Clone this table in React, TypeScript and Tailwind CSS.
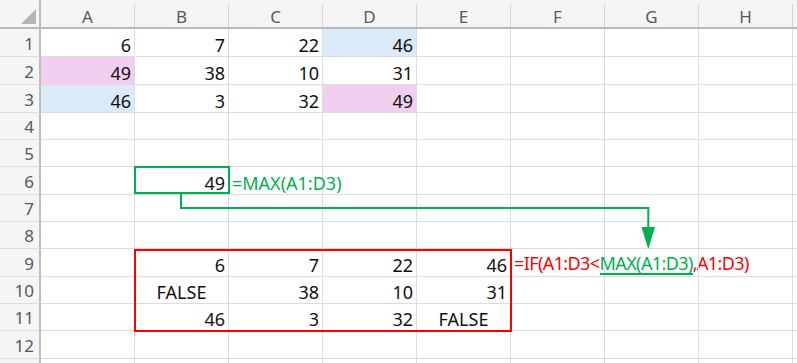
import React from "react";

type Cell = {
  v?: string;
  align?: "right" | "center" | "left";
  bg?: string;
  node?: React.ReactNode;
};

const COLS = ["A", "B", "C", "D", "E", "F", "G", "H"];
const ROW_H = [
  "h-[28px]",
  "h-[28px]",
  "h-[28px]",
  "h-[27px]",
  "h-[27px]",
  "h-[28px]",
  "h-[27px]",
  "h-[27px]",
  "h-[28px]",
  "h-[27px]",
  "h-[27px]",
  "h-[28px]",
];

const PINK = "bg-[#f2cff0]";
const BLUE = "bg-[#daeaf8]";

const n = (v: string, bg?: string): Cell => ({ v, align: "right", bg });
const b = (v: string): Cell => ({ v, align: "center" });

const ifFormula = (
  <span className="text-[#ff0000] tracking-[-0.6px]">
    =IF(A1:D3&lt;
    <span className="inline-block leading-[19px] text-[#00b050] border-b-2 border-[#00b050]">
      MAX(A1:D3)
    </span>
    ,A1:D3)
  </span>
);

const data: Record<number, Record<string, Cell>> = {
  1: { A: n("6"), B: n("7"), C: n("22"), D: n("46", BLUE) },
  2: { A: n("49", PINK), B: n("38"), C: n("10"), D: n("31") },
  3: { A: n("46", BLUE), B: n("3"), C: n("32"), D: n("49", PINK) },
  6: {
    B: n("49"),
    C: { align: "left", node: <span className="text-[#00b050]">=MAX(A1:D3)</span> },
  },
  9: { B: n("6"), C: n("7"), D: n("22"), E: n("46"), F: { align: "left", node: ifFormula } },
  10: { B: b("FALSE"), C: n("38"), D: n("10"), E: n("31") },
  11: { B: n("46"), C: n("3"), D: n("32"), E: b("FALSE") },
};

function GridCell({ cell }: { cell?: Cell }) {
  const align =
    cell?.align === "right"
      ? "justify-end pr-[3px]"
      : cell?.align === "center"
      ? "justify-center"
      : "justify-start pl-[3px]";
  return (
    <div
      className={`relative flex items-end pb-[1px] w-[94px] shrink-0 h-full border-r border-b border-[#dcdcdc] ${align} ${
        cell?.bg ?? ""
      }`}
    >
      <span className="whitespace-nowrap leading-[20px] text-[18px] text-[#111]">
        {cell?.node ?? cell?.v}
      </span>
    </div>
  );
}

export default function App() {
  return (
    <div
      className="relative w-[797px] h-[363px] overflow-hidden bg-white"
      style={{ fontFamily: '"Noto Sans", "Liberation Sans", sans-serif' }}
    >
      {/* column header strip */}
      <div className="flex h-[29px] bg-[#f5f5f5] border-b-2 border-[#b9b9b9]">
        <div className="relative w-[41px] shrink-0 h-full border-r-2 border-[#bdbdbd]">
          <div className="absolute right-[3px] bottom-[3px] w-0 h-0 border-l-[15px] border-l-transparent border-b-[15px] border-b-[#b5b5b5]" />
        </div>
        {COLS.map((c) => (
          <div
            key={c}
            className="w-[94px] shrink-0 mt-[4px] h-[23px] border-r border-[#d6d6d6] flex items-center justify-center pt-[3px] text-[17px] text-[#595959]"
          >
            {c}
          </div>
        ))}
        <div className="flex-1" />
      </div>

      {/* body rows */}
      {ROW_H.map((h, i) => {
        const r = i + 1;
        const row = data[r] ?? {};
        return (
          <div key={r} className={`flex ${h}`}>
            <div className="w-[41px] shrink-0 h-full bg-[#f5f5f5] border-r-2 border-b border-r-[#bdbdbd] border-b-[#dcdcdc] flex items-center justify-end pr-[5px] pt-[2px] text-[17px] text-[#595959]">
              {r}
            </div>
            {COLS.map((c) => (
              <GridCell key={c} cell={row[c]} />
            ))}
            <div className="flex-1 h-full border-b border-[#dcdcdc]" />
          </div>
        );
      })}
      <div className="flex h-[10px]">
        <div className="w-[41px] shrink-0 h-full bg-[#f5f5f5] border-r-2 border-[#bdbdbd]" />
        {COLS.map((c) => (
          <div key={c} className="w-[94px] shrink-0 h-full border-r border-[#dcdcdc]" />
        ))}
      </div>

      {/* highlight boxes */}
      <div className="absolute left-[134px] top-[166px] w-[96px] h-[28px] border-2 border-[#00b050] pointer-events-none" />
      <div className="absolute left-[134px] top-[249px] w-[378px] h-[83px] border-2 border-[#ff0000] pointer-events-none" />

      {/* connector arrow from the MAX result down to the IF formula */}
      <svg
        className="absolute left-0 top-0 pointer-events-none"
        width="797"
        height="363"
        viewBox="0 0 797 363"
      >
        <path
          d="M181 193 V208 H648.3 V230"
          fill="none"
          stroke="#00b050"
          strokeWidth="2"
        />
        <polygon points="641.5,227 655,227 648.3,249" fill="#00b050" />
      </svg>
    </div>
  );
}
